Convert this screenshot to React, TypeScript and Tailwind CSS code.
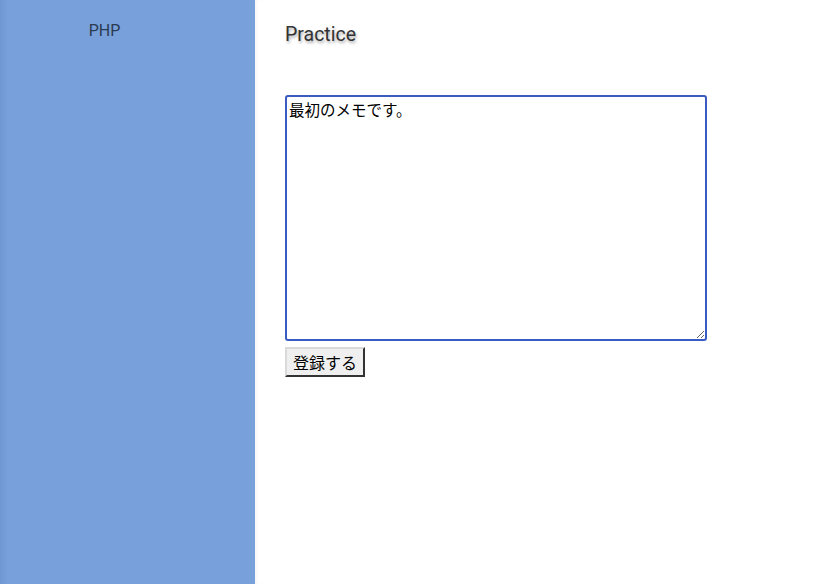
import React from 'react';

export default function App() {
  return (
    <div className="flex h-[584px] w-full bg-white font-['Roboto','Noto_Sans_CJK_JP',sans-serif] overflow-hidden">
      {/* Sidebar */}
      <aside className="w-[255px] shrink-0 h-full bg-[#78a1db] bg-gradient-to-r from-[#6f98d2] via-[#78a1db] via-[3%] to-[#78a1db] text-center">
        <p className="pt-[20px] pr-[46px] text-[16px] text-[#2b3a50] leading-[22px]">PHP</p>
      </aside>

      {/* Main */}
      <main className="flex-1 pl-[30px] pt-[22px] shadow-[inset_3px_0_4px_-2px_rgba(0,0,0,0.06)]">
        <h1 className="text-[19.5px] text-[#333] leading-[25px] [text-shadow:1px_2px_3px_rgba(0,0,0,0.35)]">Practice</h1>

        <form className="mt-[48px] flex flex-col items-start gap-[6px]" onSubmit={(e) => e.preventDefault()}>
          <textarea
            defaultValue="最初のメモです。"
            className="w-[422px] h-[246px] border-2 border-[#3b5bc2] rounded-[3px] px-[2px] py-[3px] text-[15.5px] leading-[18px] text-black font-['Noto_Sans_CJK_JP',sans-serif] outline-none resize-y"
          />
          <button
            type="submit"
            className="w-[80px] h-[30px] bg-[#efefef] border-2 border-t-[#dadada] border-l-[#dadada] border-b-[#333] border-r-[#333] text-[16px] text-black font-['Noto_Sans_CJK_JP',sans-serif] leading-none"
          >
            登録する
          </button>
        </form>
      </main>
    </div>
  );
}
